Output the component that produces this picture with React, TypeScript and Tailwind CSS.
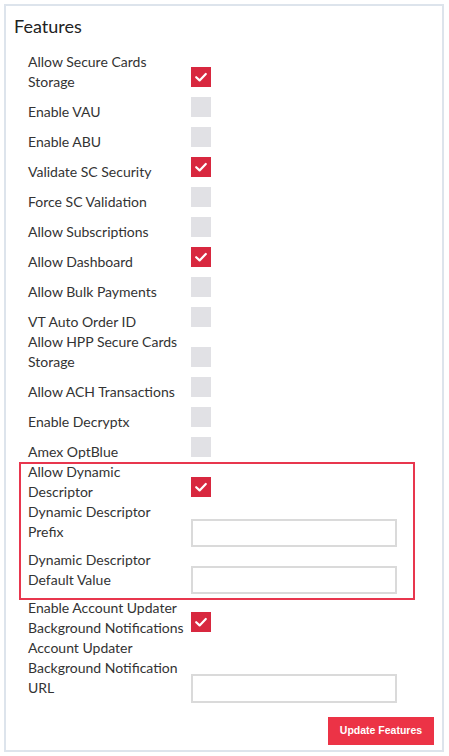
import React from "react";

const Check = ({ on }: { on: boolean }) =>
  on ? (
    <div className="w-5 h-5 bg-[#d8283f] flex items-center justify-center">
      <svg width="20" height="20" viewBox="0 0 20 20">
        <polyline points="5.2,10.2 8.6,13.4 14.8,7" fill="none" stroke="#ffffff" strokeWidth="2.2" strokeLinecap="round" strokeLinejoin="round" />
      </svg>
    </div>
  ) : (
    <div className="w-5 h-5 bg-[#e1e1e5]" />
  );

type Row = {
  lines: string[];
  kind: "cb" | "input";
  on?: boolean;
  h: string;
  labelPt: string;
  ctrlMt: string;
};

const single = (text: string, on = false): Row => ({
  lines: [text],
  kind: "cb",
  on,
  h: "h-[30px]",
  labelPt: "pt-[10px]",
  ctrlMt: "mt-[5px]",
});

const rowsTop: Row[] = [
  { lines: ["Allow Secure Cards", "Storage"], kind: "cb", on: true, h: "h-[40px]", labelPt: "pt-0", ctrlMt: "mt-[15px]" },
  single("Enable VAU"),
  single("Enable ABU"),
  single("Validate SC Security", true),
  single("Force SC Validation"),
  single("Allow Subscriptions"),
  single("Allow Dashboard", true),
  single("Allow Bulk Payments"),
  single("VT Auto Order ID"),
  { lines: ["Allow HPP Secure Cards", "Storage"], kind: "cb", on: false, h: "h-[40px]", labelPt: "pt-0", ctrlMt: "mt-[15px]" },
  single("Allow ACH Transactions"),
  single("Enable Decryptx"),
  single("Amex OptBlue"),
];

const rowsBox: Row[] = [
  { lines: ["Allow Dynamic", "Descriptor"], kind: "cb", on: true, h: "h-[40px]", labelPt: "pt-0", ctrlMt: "mt-[15px]" },
  { lines: ["Dynamic Descriptor", "Prefix"], kind: "input", h: "h-[48px]", labelPt: "pt-0", ctrlMt: "mt-[17px]" },
  { lines: ["Dynamic Descriptor", "Default Value"], kind: "input", h: "h-[48px]", labelPt: "pt-0", ctrlMt: "mt-[16px]" },
];

const rowsBottom: Row[] = [
  { lines: ["Enable Account Updater", "Background Notifications"], kind: "cb", on: true, h: "h-[40px]", labelPt: "pt-0", ctrlMt: "mt-[14px]" },
  { lines: ["Account Updater", "Background Notification", "URL"], kind: "input", h: "h-[65px]", labelPt: "pt-0", ctrlMt: "mt-[36px]" },
];

const RowView = ({ r }: { r: Row }) => (
  <div className={`flex items-start ${r.h}`}>
    <div className={`w-[163px] shrink-0 whitespace-nowrap text-[14px] leading-[20px] text-[#333333] ${r.labelPt}`}>
      {r.lines.map((l, i) => (
        <div key={i}>{l}</div>
      ))}
    </div>
    <div className={r.ctrlMt}>
      {r.kind === "cb" ? (
        <Check on={!!r.on} />
      ) : (
        <div className={`w-[206px] ${r.lines.length === 3 ? "h-[29px]" : "h-[28px]"} border-2 border-[#dadada] bg-white`} />
      )}
    </div>
  </div>
);

export default function App() {
  return (
    <div className="w-[449px] h-[756px] bg-white p-1" style={{ fontFamily: "Lato, 'Noto Sans', sans-serif" }}>
      <div className="w-[440px] h-[748px] border-2 border-[#dde4ec] flex flex-col">
        <div className="ml-[8px] mt-[8px] text-[18px] leading-[24px] text-[#222222]">Features</div>
        <div className="ml-[22px] mt-[14px] flex flex-col">
          {rowsTop.map((r, i) => (
            <RowView key={i} r={r} />
          ))}
          <div className="relative flex flex-col">
            {rowsBox.map((r, i) => (
              <RowView key={i} r={r} />
            ))}
            <div className="absolute left-[-9px] top-0 w-[396px] h-[138px] border-2 border-[#e8364e] pointer-events-none" />
          </div>
          {rowsBottom.map((r, i) => (
            <RowView key={i} r={r} />
          ))}
        </div>
        <div className="flex justify-end mr-[8px] mt-[14px]">
          <button
            className="w-[106px] h-[28px] bg-[#ec3346] text-white font-bold text-[10.5px]"
            style={{ fontFamily: "'Liberation Sans', Arial, sans-serif" }}
          >
            Update Features
          </button>
        </div>
      </div>
    </div>
  );
}
